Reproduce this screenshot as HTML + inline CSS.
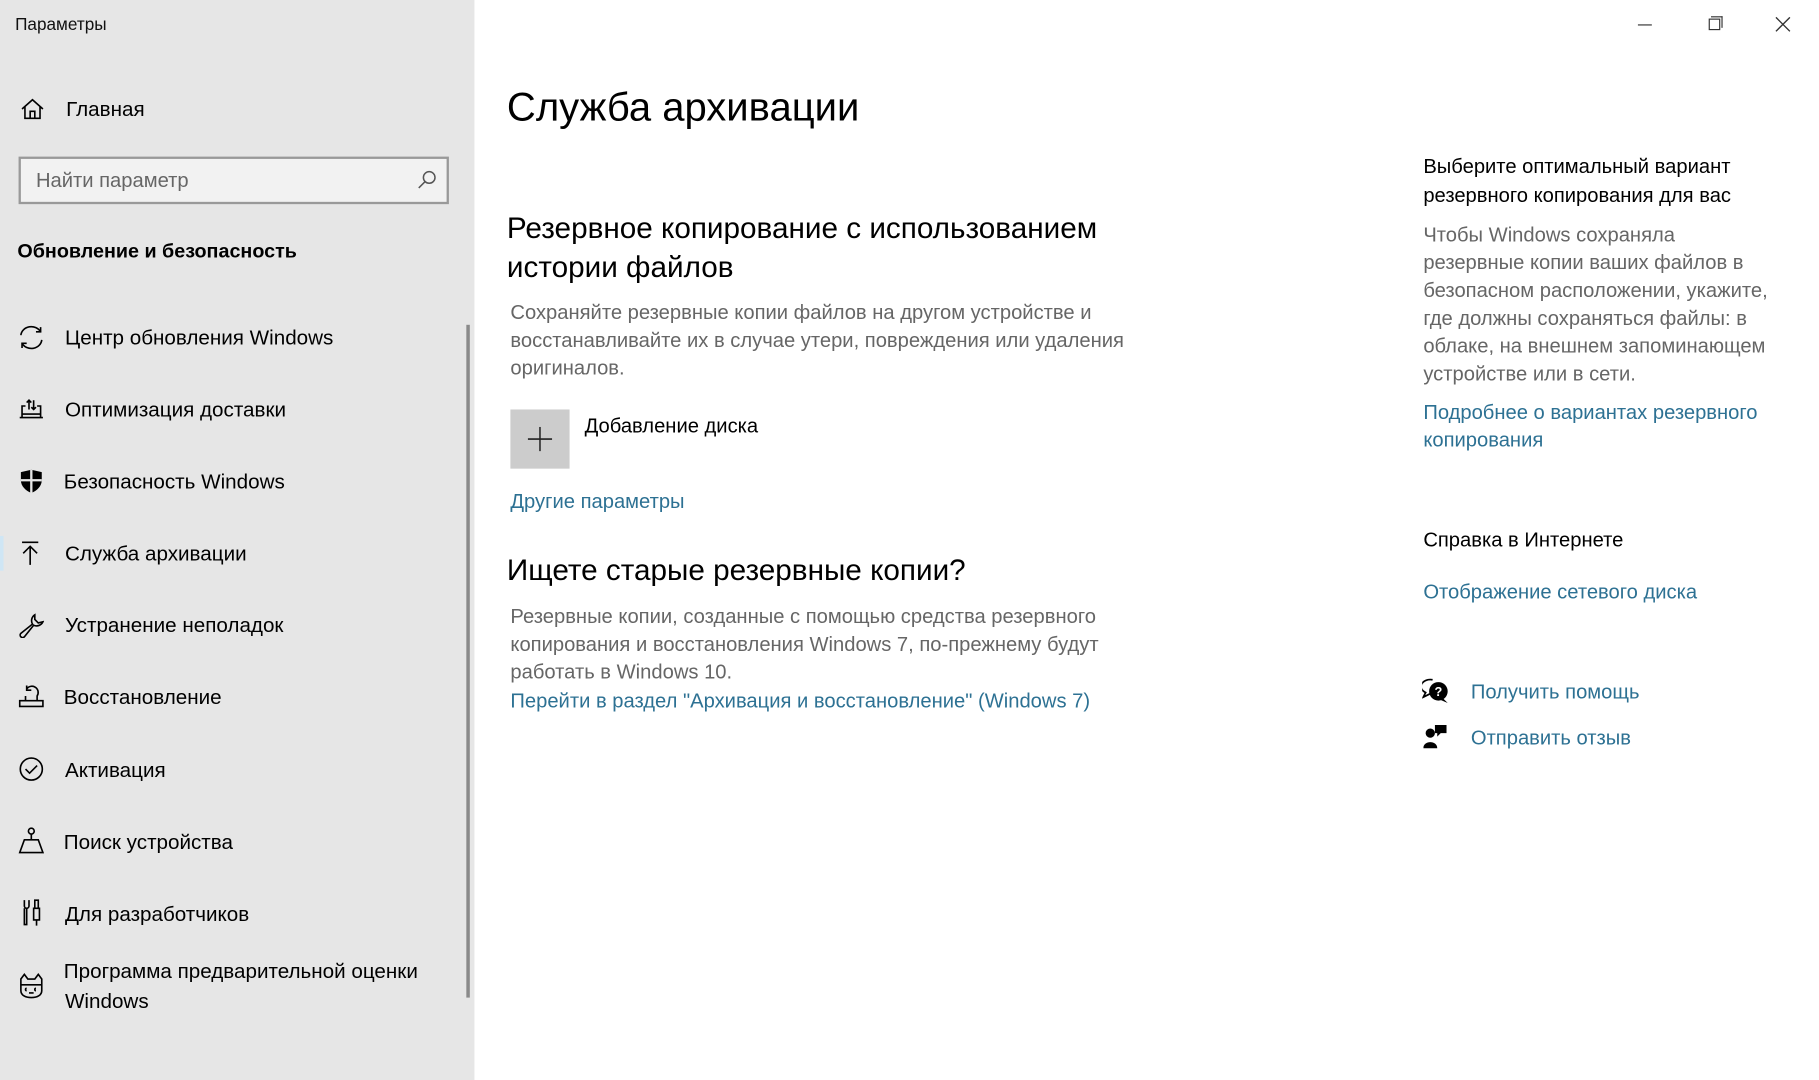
<!DOCTYPE html>
<html><head><meta charset="utf-8">
<style>
html,body{margin:0;padding:0;width:1819px;height:1080px;overflow:hidden;background:#fff;}
#w{position:absolute;left:0;top:0;width:1568px;height:931px;transform:scale(1.1600,1.1600);transform-origin:0 0;font-family:"Segoe UI","Liberation Sans",sans-serif;color:#000;}
.a{position:absolute;white-space:nowrap;line-height:24px;}
#side{position:absolute;left:0;top:0;width:409px;height:931px;background:#e6e6e6;}
.it{font-size:17.8px;}
.g{color:#666;font-size:17.4px;}
.l{color:#2d7193;font-size:17.4px;}
.ic{position:absolute;}
</style></head><body><div id="w">
<div id="side"></div>
<div class="a" style="left:13px;top:10px;font-size:14.8px;color:#111">Параметры</div>

<svg class="ic" style="left:17px;top:84px" width="22" height="20" viewBox="0 0 22 20" fill="none" stroke="#000" stroke-width="1.4"><path d="M2 10 L11 2 L20 10 M4.5 8 V18 H17.5 V8 M9 18 V12 H13 V18"/></svg>
<div class="a it" style="left:57px;top:82px">Главная</div>

<div style="position:absolute;left:16px;top:135px;width:367px;height:37px;border:2px solid #999;background:#f2f2f2"></div>
<div class="a" style="left:31px;top:143px;font-size:17.4px;color:#666">Найти параметр</div>
<svg class="ic" style="left:359px;top:146px" width="18" height="18" viewBox="0 0 18 18" fill="none" stroke="#555" stroke-width="1.3"><circle cx="11" cy="7" r="5"/><path d="M7.5 10.5 L2 16"/></svg>

<div class="a" style="left:15px;top:205px;font-size:17px;font-weight:bold">Обновление и безопасность</div>

<div style="position:absolute;left:402px;top:280px;width:3px;height:580px;background:#8a8a8a"></div>
<div style="position:absolute;left:0;top:462px;width:3px;height:30px;background:#cfe6f5"></div>

<svg class="ic" style="left:15px;top:280px" width="24" height="22" viewBox="0 0 24 22" fill="none" stroke="#000" stroke-width="1.4"><path d="M3 9 A9 8 0 0 1 20 6 M21 13 A9 8 0 0 1 4 16"/><path d="M20 2 V6 H16 M4 20 V16 H8"/></svg>
<div class="a it" style="left:56px;top:279px">Центр обновления Windows</div>

<svg class="ic" style="left:16px;top:342px" width="22" height="20" viewBox="0 0 22 20" fill="none" stroke="#000" stroke-width="1.4"><path d="M1 18 H21 M3 18 V8 H6 M16 8 H19 V18 M3 15 H19 M9 3 V11 M7 5 L9 3 L11 5 M13 3 V11 M11 9 L13 11 L15 9"/></svg>
<div class="a it" style="left:56px;top:341px">Оптимизация доставки</div>

<svg class="ic" style="left:16px;top:404px" width="22" height="22" viewBox="0 0 22 22"><path d="M11 1 L20 3 V10 C20 15 16 19 11 21 C6 19 2 15 2 10 V3 Z" fill="#000"/><path d="M11 1 V21 M2 10 H20" stroke="#e6e6e6" stroke-width="2"/></svg>
<div class="a it" style="left:55px;top:403px">Безопасность Windows</div>

<svg class="ic" style="left:16px;top:466px" width="20" height="22" viewBox="0 0 20 22" fill="none" stroke="#000" stroke-width="1.4"><path d="M3 1.5 H17 M10 21 V5 M4 11 L10 5 L16 11"/></svg>
<div class="a it" style="left:56px;top:465px">Служба архивации</div>

<svg class="ic" style="left:16px;top:528px" width="22" height="22" viewBox="0 0 22 22" fill="none" stroke="#000" stroke-width="1.4"><path d="M14 2 A6 6 0 0 0 12 10 L2 18 A2 2 0 0 0 5 21 L13 11 A6 6 0 0 0 21 8 L17 9 L14 6 Z"/></svg>
<div class="a it" style="left:56px;top:527px">Устранение неполадок</div>

<svg class="ic" style="left:16px;top:590px" width="22" height="20" viewBox="0 0 22 20" fill="none" stroke="#000" stroke-width="1.4"><path d="M1 19 H21 V14 H1 Z M6 14 V10 M16 14 V10 A5 5 0 0 0 7 4 M7 1 V5 H11"/></svg>
<div class="a it" style="left:55px;top:589px">Восстановление</div>

<svg class="ic" style="left:16px;top:652px" width="22" height="22" viewBox="0 0 22 22" fill="none" stroke="#000" stroke-width="1.4"><circle cx="11" cy="11" r="9.5"/><path d="M6 11 L9.5 14.5 L16 8"/></svg>
<div class="a it" style="left:56px;top:652px">Активация</div>

<svg class="ic" style="left:16px;top:713px" width="22" height="24" viewBox="0 0 22 24" fill="none" stroke="#000" stroke-width="1.4"><circle cx="11" cy="3.5" r="2.5"/><path d="M11 6 V11 M5 11 H17 L21 22 H1 Z"/></svg>
<div class="a it" style="left:55px;top:714px">Поиск устройства</div>

<svg class="ic" style="left:18px;top:775px" width="18" height="24" viewBox="0 0 18 24" fill="none" stroke="#000" stroke-width="1.4"><path d="M3 1 V6 A2 2 0 0 0 7 6 V1 M5 8 V22 H3 V8 M12 1 H15 V8 H12 Z M11 8 H16 V18 H11 Z M13.5 18 V23"/></svg>
<div class="a it" style="left:56px;top:776px">Для разработчиков</div>

<svg class="ic" style="left:16px;top:838px" width="22" height="24" viewBox="0 0 22 24" fill="none" stroke="#000" stroke-width="1.4"><path d="M2 6 L5 2 L8 6 H14 L17 2 L20 6 V16 C20 20 16 22 11 22 C6 22 2 20 2 16 Z M2 11 H20 M7 14 A1 1 0 0 0 7 16 M15 14 A1 1 0 0 0 15 16 M9 18 H13"/></svg>
<div class="a it" style="left:55px;top:825px">Программа предварительной оценки</div>
<div class="a it" style="left:56px;top:851px">Windows</div>

<div style="position:absolute;left:1412px;top:21px;width:12px;height:1px;background:#333"></div>
<div style="position:absolute;left:1473px;top:16px;width:8px;height:8px;border:1px solid #333"></div>
<div style="position:absolute;left:1475px;top:14px;width:9px;height:9px;border-top:1px solid #333;border-right:1px solid #333"></div>
<svg class="ic" style="left:1530px;top:14px" width="14" height="14" viewBox="0 0 14 14" stroke="#333" stroke-width="1.2"><path d="M1 1 L13 13 M13 1 L1 13"/></svg>

<div class="a" style="left:437px;top:71px;font-size:34.5px;line-height:44px;font-weight:300">Служба архивации</div>
<div class="a" style="left:437px;top:180px;font-size:25.6px;line-height:34px">Резервное копирование с использованием</div>
<div class="a" style="left:437px;top:214px;font-size:25.6px;line-height:34px">истории файлов</div>
<div class="a g" style="left:440px;top:257px">Сохраняйте резервные копии файлов на другом устройстве и</div>
<div class="a g" style="left:440px;top:281px">восстанавливайте их в случае утери, повреждения или удаления</div>
<div class="a g" style="left:440px;top:305px">оригиналов.</div>

<div style="position:absolute;left:440px;top:353px;width:51px;height:51px;background:#ccc"></div>
<svg class="ic" style="left:455px;top:368px" width="21" height="21" viewBox="0 0 21 21" stroke="#222" stroke-width="1.3"><path d="M10.5 0 V21 M0 10.5 H21"/></svg>
<div class="a" style="left:504px;top:355px;font-size:17.4px">Добавление диска</div>
<div class="a l" style="left:440px;top:420px">Другие параметры</div>

<div class="a" style="left:437px;top:475px;font-size:25.6px;line-height:34px">Ищете старые резервные копии?</div>
<div class="a g" style="left:440px;top:519px">Резервные копии, созданные с помощью средства резервного</div>
<div class="a g" style="left:440px;top:543px">копирования и восстановления Windows 7, по-прежнему будут</div>
<div class="a g" style="left:440px;top:567px">работать в Windows 10.</div>
<div class="a l" style="left:440px;top:592px">Перейти в раздел "Архивация и восстановление" (Windows 7)</div>

<div class="a" style="left:1227px;top:131px;font-size:17.4px">Выберите оптимальный вариант</div>
<div class="a" style="left:1227px;top:156px;font-size:17.4px">резервного копирования для вас</div>
<div class="a g" style="left:1227px;top:190px">Чтобы Windows сохраняла</div>
<div class="a g" style="left:1227px;top:214px">резервные копии ваших файлов в</div>
<div class="a g" style="left:1227px;top:238px">безопасном расположении, укажите,</div>
<div class="a g" style="left:1227px;top:262px">где должны сохраняться файлы: в</div>
<div class="a g" style="left:1227px;top:286px">облаке, на внешнем запоминающем</div>
<div class="a g" style="left:1227px;top:310px">устройстве или в сети.</div>
<div class="a l" style="left:1227px;top:343px">Подробнее о вариантах резервного</div>
<div class="a l" style="left:1227px;top:367px">копирования</div>
<div class="a" style="left:1227px;top:453px;font-size:17.4px">Справка в Интернете</div>
<div class="a l" style="left:1227px;top:498px">Отображение сетевого диска</div>

<svg class="ic" style="left:1226px;top:585px" width="24" height="22" viewBox="0 0 24 22"><path d="M9 1 A8 6 0 0 0 3 12 L1 16 L7 13" fill="none" stroke="#000" stroke-width="1.5"/><circle cx="14" cy="11" r="8" fill="#000"/><path d="M18 17 L22 21 L15 18Z" fill="#000"/><text x="14" y="15" font-size="11" font-weight="bold" fill="#fff" text-anchor="middle" font-family="Liberation Sans,sans-serif">?</text></svg>
<div class="a l" style="left:1268px;top:584px">Получить помощь</div>
<svg class="ic" style="left:1227px;top:624px" width="22" height="22" viewBox="0 0 22 22" fill="#000"><circle cx="6" cy="8" r="4"/><path d="M0 21 C0 14 12 14 12 21 Z"/><path d="M10 1 H20 V8 H15 L12 11 V8 H10 Z"/></svg>
<div class="a l" style="left:1268px;top:624px">Отправить отзыв</div>
</div></body></html>
